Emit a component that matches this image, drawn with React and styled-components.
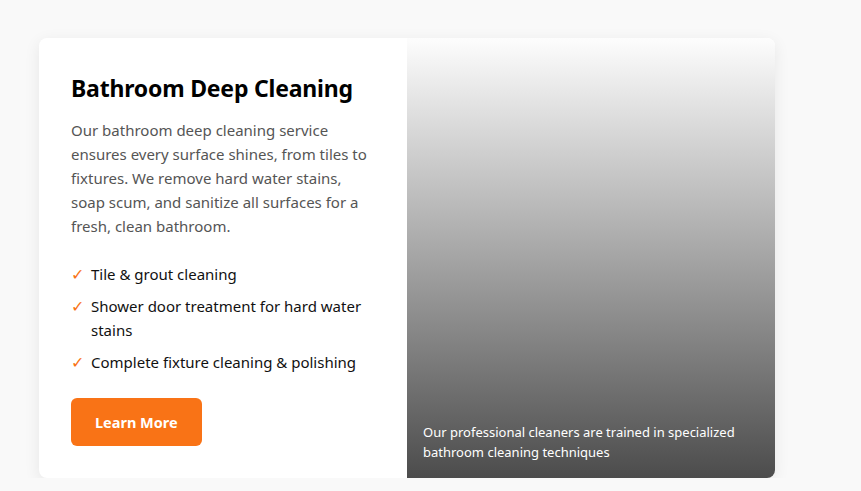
import styled, { createGlobalStyle } from "styled-components";

const Global = createGlobalStyle`
	body {
		margin: 0;
		background: #f9f9f9;
		font-family: "Noto Sans", "Open Sans", sans-serif;
	}
`;

const features = [
	"Tile & grout cleaning",
	"Shower door treatment for hard water stains",
	"Complete fixture cleaning & polishing",
];

function App() {
	return (
		<Page>
			<Global />
			<Card>
				<Info>
					<Title>Bathroom Deep Cleaning</Title>
					<Text>
						Our bathroom deep cleaning service ensures every surface shines, from
						tiles to fixtures. We remove hard water stains, soap scum, and
						sanitize all surfaces for a fresh, clean bathroom.
					</Text>
					<List>
						{features.map((f) => (
							<Item key={f}>
								<Check>✓</Check>
								<span>{f}</span>
							</Item>
						))}
					</List>
					<Button>Learn More</Button>
				</Info>
				<Picture>
					<Caption>
						Our professional cleaners are trained in specialized bathroom
						cleaning techniques
					</Caption>
				</Picture>
			</Card>
		</Page>
	);
}

const Page = styled.div`
	padding: 38px 0 0 39px;
`;

const Card = styled.div`
	width: 736px;
	height: 440px;
	display: grid;
	grid-template-columns: 1fr 1fr;
	background: #fff;
	border-radius: 8px;
	overflow: hidden;
	box-shadow: 0 4px 16px rgba(0, 0, 0, 0.08);
`;

const Info = styled.div`
	padding: 32px;
	display: flex;
	flex-direction: column;
	align-items: flex-start;
`;

const Title = styled.h2`
	margin: 0 0 12px;
	font-size: 23px;
	letter-spacing: -0.2px;
	line-height: 36px;
	font-weight: 700;
	color: #000;
`;

const Text = styled.p`
	margin: 0 0 24px;
	font-size: 15px;
	line-height: 24px;
	color: #555;
`;

const List = styled.ul`
	margin: 0 0 24px;
	padding: 0;
	list-style: none;
	display: flex;
	flex-direction: column;
	gap: 8px;
`;

const Item = styled.li`
	display: flex;
	gap: 8px;
	font-size: 15px;
	line-height: 24px;
	color: #111;
`;

const Check = styled.span`
	color: #f97316;
	width: 12px;
	flex-shrink: 0;
	font-size: 16px;
`;

const Button = styled.button`
	height: 48px;
	padding: 0 24px;
	border: none;
	border-radius: 6px;
	background: #f97316;
	color: #fff;
	font-family: inherit;
	font-size: 14.5px;
	font-weight: 700;
	cursor: pointer;
`;

const Picture = styled.div`
	display: flex;
	align-items: flex-end;
	padding: 16px;
	background: linear-gradient(#fdfdfd, #4c4c4c);
`;

const Caption = styled.p`
	margin: 0;
	font-size: 13px;
	line-height: 20px;
	color: #fff;
`;

export default App;
